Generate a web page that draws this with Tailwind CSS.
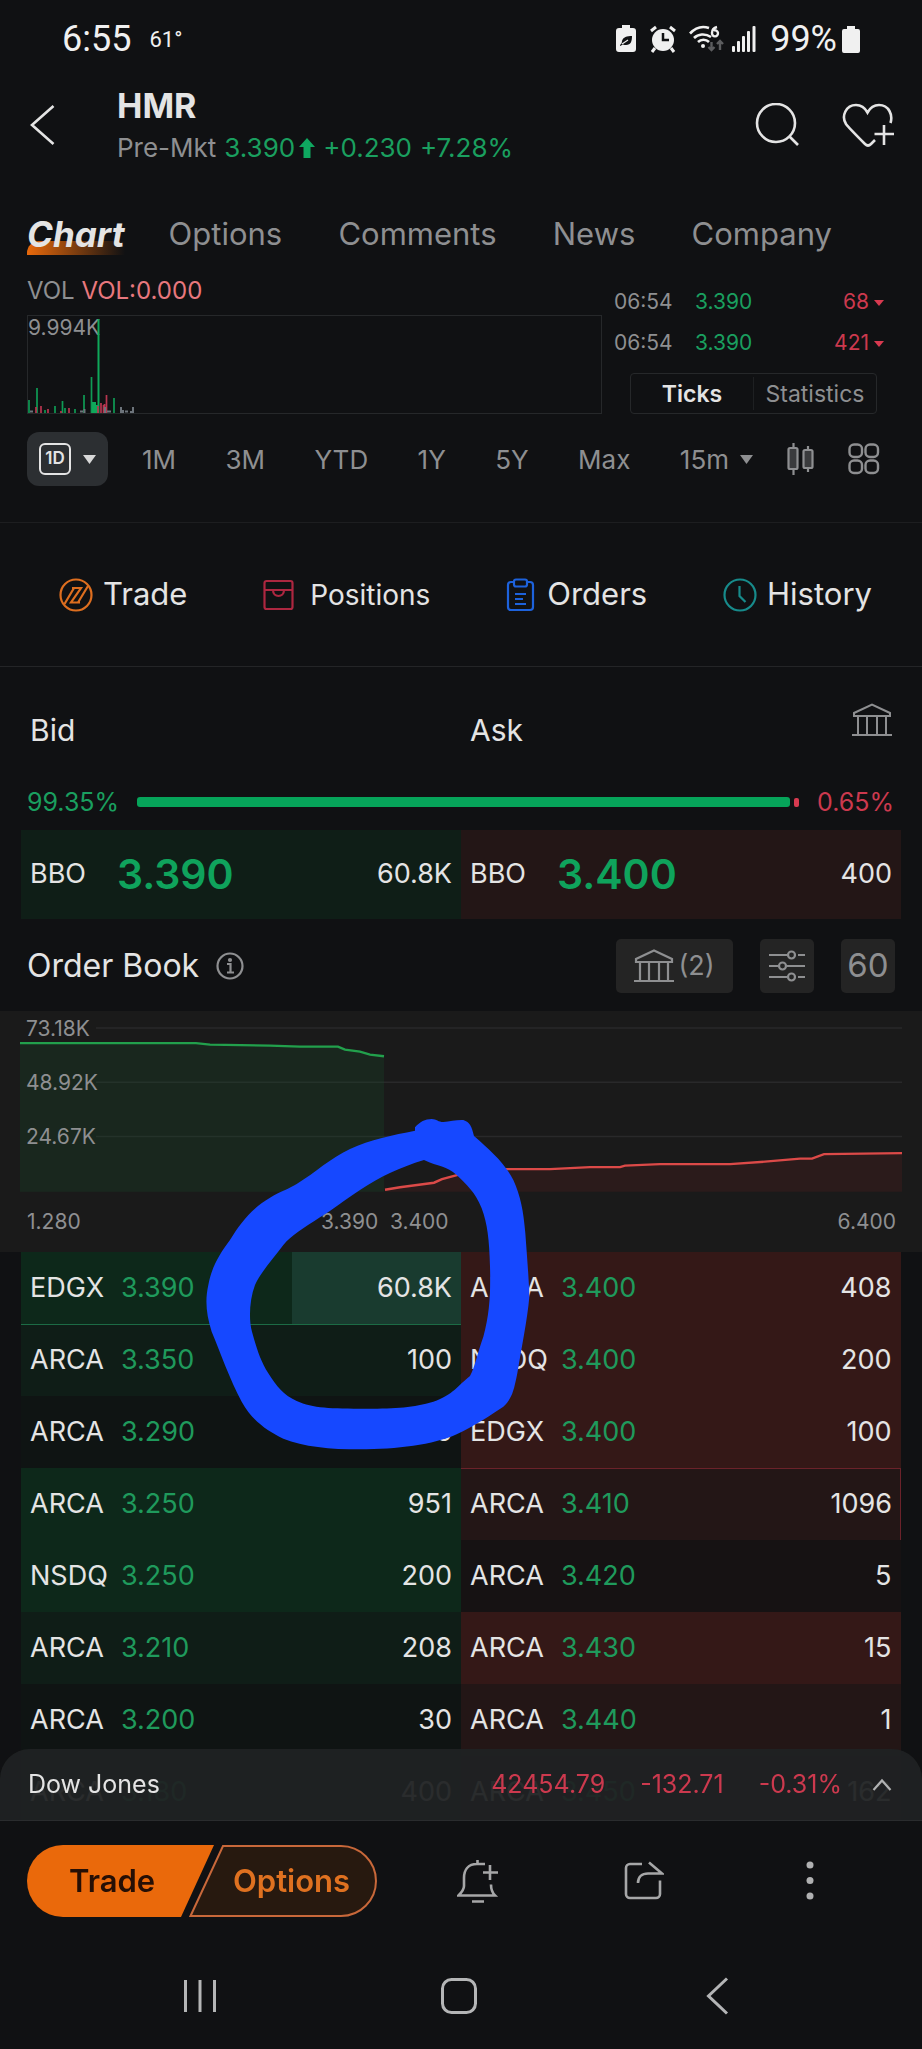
<!DOCTYPE html>
<html lang="en">
<head>
<meta charset="utf-8">
<meta name="viewport" content="width=device-width, initial-scale=1">
<title>HMR – Quote</title>
<script src="https://cdn.jsdelivr.net/npm/@tailwindcss/browser@4"></script>
</head>
<body class="bg-[#101113] text-[#e4e4e4] font-['Inter','Liberation_Sans',sans-serif]">
<div class="relative min-h-screen overflow-hidden">

  <!-- Device status bar -->
  <div class="flex h-[78px] items-center justify-between pl-[62px] pr-[62px] font-['Roboto',sans-serif] text-[#f0f0f0]">
    <div class="flex items-center gap-[18px]">
      <span class="text-[36px]">6:55</span>
      <span class="text-[22px]">61°</span>
    </div>
    <div class="flex items-center">
      <svg class="mr-[14px]" width="20" height="28" viewBox="0 0 20 28" fill="#f0f0f0"><path d="M6 0h8v3h3a3 3 0 0 1 3 3v18a3 3 0 0 1-3 3H3a3 3 0 0 1-3-3V6a3 3 0 0 1 3-3h3z"/><path d="M4 20c1-1 2-2 2-4 1-4 5-5 10-5 0 5-1 9-6 9-1 0-2 0-3-.5L4 21z" fill="#101113"/><path d="M6 19l6-4" stroke="#f0f0f0" stroke-width="1.2"/></svg>
      <svg class="mr-[13px]" width="26" height="28" viewBox="0 0 26 28"><circle cx="13" cy="15" r="11" fill="#f0f0f0"/><path d="M13 8v7h6" stroke="#101113" stroke-width="2.5" fill="none"/><path d="M1 6l5-4M25 6l-5-4M5 23l-3 4M21 23l3 4" stroke="#f0f0f0" stroke-width="3"/></svg>
      <svg class="mr-[8px]" width="35" height="28" viewBox="0 0 35 28" fill="none"><path d="M1 8.500C7 2 14 1 20 3M5 13c4-4 11-5 17-1M9 17c3-3 8-3 11 0" stroke="#f0f0f0" stroke-width="2.600"/><circle cx="14" cy="21" r="2" fill="#f0f0f0"/><path d="M28 2c-4 1-5 4-5 6a3 3 0 1 0 2-2.500" stroke="#f0f0f0" stroke-width="2.400"/><path d="M22.500 17v8m-3-3l3 3 3-3M31 25v-9m-3 3l3-3 3 3" stroke="#5c5d5f" stroke-width="2.400"/></svg>
      <svg class="mr-[14px]" width="24" height="26" viewBox="0 0 24 26" fill="#f0f0f0"><rect y="20" width="3" height="6" rx="1"/><rect x="5" y="15" width="3" height="11" rx="1"/><rect x="10" y="10" width="3" height="16" rx="1"/><rect x="15" y="5" width="3" height="21" rx="1"/><rect x="20.500" width="3" height="26" rx="1"/></svg>
      <span class="mr-[5px] text-[36px]">99%</span>
      <svg width="18" height="27" viewBox="0 0 18 27" fill="#f0f0f0"><path d="M5 0h8v3h3a2 2 0 0 1 2 2v20a2 2 0 0 1-2 2H2a2 2 0 0 1-2-2V5a2 2 0 0 1 2-2h3z"/></svg>
    </div>
  </div>

  <!-- Ticker header -->
  <header class="flex h-[94px] items-center pl-[30px] pr-[28px]">
    <button aria-label="Back" class="mr-[62px]"><svg width="25" height="42" viewBox="0 0 25 42" fill="none" stroke="#e4e4e4" stroke-width="2.600"><path d="M23.500 2L2 21l21.500 19"/></svg></button>
    <div class="flex-1 pt-[3px]">
      <h1 class="text-[34px] leading-[42px] font-bold">HMR</h1>
      <p class="flex items-center gap-[8px] text-[26px] leading-[42px] text-[#1a9f5f]">
        <span class="text-[#8e8f91]">Pre-Mkt</span>
        <span class="flex items-center gap-[4px]">3.390<svg width="16" height="20" viewBox="0 0 16 20" fill="#0fa860"><path d="M8 0l8 9h-4.500v11h-7V9H0z"/></svg></span>
        <span>+0.230</span><span>+7.28%</span>
      </p>
    </div>
    <button aria-label="Search" class="mr-[43px]"><svg width="44" height="44" viewBox="0 0 44 44" fill="none" stroke="#e4e4e4" stroke-width="2.600"><circle cx="21" cy="20" r="19"/><path d="M34 33l9 9"/></svg></button>
    <button aria-label="Add to watchlist"><svg width="52" height="44" viewBox="0 0 52 44" fill="none" stroke="#e4e4e4" stroke-width="2.600"><path d="M48.500 20C51 12 47 2 37 2c-5 0-9 3-11.500 7.500C23 5 19 2 14 2 4 2-1 13 4 21c3 4 13 14 19 20 2 2 4 2 6 0l4-4M42 22v20M32.500 31H52"/></svg></button>
  </header>

  <!-- Section tabs -->
  <nav class="flex items-center pt-[38px] pr-[90px] pl-[27px] text-[31px] leading-[48px] text-[#8e8f91]">
    <a href="#chart" class="relative mr-[44px] text-[35px] font-bold text-[#e4e4e4] italic"><span class="absolute bottom-[3px] left-0 h-[14px] w-full rounded-tl-[12px] bg-linear-to-r from-[#e8690b] to-transparent"></span><span class="relative">Chart</span></a>
    <div class="flex flex-1 justify-between">
      <a href="#options">Options</a>
      <a href="#comments">Comments</a>
      <a href="#news">News</a>
      <a href="#company">Company</a>
    </div>
  </nav>

  <!-- Volume chart and recent ticks -->
  <section class="flex gap-[12px] pl-[27px]">
    <div class="flex-1 pt-[14px]">
      <p class="mb-[5px] text-[24px] leading-[38px] text-[#8e8f91]">VOL <span class="text-[#e8787e]">VOL:0.000</span></p>
      <div class="relative h-[99px] border border-[#26282a]">
        <span class="text-[21px] leading-[24px] text-[#8e8f91]">9.994K</span>
        <svg class="absolute bottom-0 left-0" width="110" height="97" viewBox="0 0 110 97">
          <path stroke="#0f9b55" stroke-width="1.700" d="M1 97V84M9 97V72M17 97v-3M27 97v-7M34.500 97V85M37 97v-5M47 97v-4M56 97V79M63.500 97V61M86 97V82"/>
          <path stroke="#0fa85a" stroke-width="2" d="M70.500 97V3M65 97V86M67 97V86M69 97V89"/>
          <path stroke="#b83650" stroke-width="1.700" d="M8 97v-6M13 97v-7M20 97v-4M33 97v-2M41 97v-5M70 97v-7M73 97V87M75.500 97v-8M78.500 97V79M76.500 97v-9"/>
          <path stroke="#6d747b" stroke-width="2" d="M2 95.500h3M52 95.500h3M56.500 97v-4M77 97v-6M79 95.500h4M93 97v-6M95 97v-3M97 95.500h3M103 97v-2M105 97v-6"/>
        </svg>
      </div>
    </div>
    <div class="w-[308px] pt-[23px]">
      <table class="w-[270px] text-[21px]">
        <tbody>
          <tr class="h-[41px]"><td class="w-[81px] text-[#8e8f91]">06:54</td><td class="text-[#1a9f5f]">3.390</td><td class="text-right text-[#cc394e]">68<svg class="ml-[5px] inline align-middle" width="10" height="7" viewBox="0 0 10 7"><path d="M0 0h10L5 6z" fill="#d83a50"/></svg></td></tr>
          <tr class="h-[41px]"><td class="text-[#8e8f91]">06:54</td><td class="text-[#1a9f5f]">3.390</td><td class="text-right text-[#cc394e]">421<svg class="ml-[5px] inline align-middle" width="10" height="7" viewBox="0 0 10 7"><path d="M0 0h10L5 6z" fill="#d83a50"/></svg></td></tr>
        </tbody>
      </table>
      <div class="mt-[10px] ml-[16px] flex h-[41px] w-[247px] items-center rounded-[4px] border border-[#26282a] text-[23px]">
        <button class="h-[33px] flex-1 border-r border-[#1e2022] font-semibold leading-[30px]">Ticks</button>
        <button class="h-[33px] flex-1 leading-[30px] text-[#8e8f91]">Statistics</button>
      </div>
    </div>
  </section>

  <!-- Time range -->
  <div class="mt-[18px] flex items-center border-b border-[#1d1e20] pr-[42px] pb-[36px] pl-[27px] text-[26px] text-[#8e8f91]">
    <button aria-label="1 day" class="flex h-[54px] w-[81px] items-center justify-center gap-[12px] rounded-[12px] bg-[#2c2f32] text-[#e4e4e4]">
      <span class="flex h-[32px] w-[32px] items-center justify-center rounded-[6px] border-2 border-[#e4e4e4] text-[17px] font-semibold">1D</span>
      <svg width="13" height="9" viewBox="0 0 13 9"><path d="M0 0h13L6.500 9z" fill="#d8d8d8"/></svg>
    </button>
    <div class="flex flex-1 items-center justify-between px-[34px]">
      <button>1M</button><button>3M</button><button>YTD</button><button>1Y</button><button>5Y</button><button>Max</button>
      <button class="flex items-center gap-[11px]">15m<svg width="13" height="9" viewBox="0 0 13 9"><path d="M0 0h13L6.500 9z" fill="#8e8f91"/></svg></button>
    </div>
    <button aria-label="Candles" class="mr-[33px]"><svg width="28" height="32" viewBox="0 0 28 32" fill="#3a3b3d" stroke="#8e8f91" stroke-width="2.200"><path d="M6.500 0v32M21 3v26"/><rect x="1.500" y="5" width="9" height="21" rx="1.500"/><rect x="16.500" y="7" width="9" height="18" rx="1.500"/></svg></button>
    <button aria-label="Chart tools"><svg width="32" height="32" viewBox="0 0 32 32" fill="none" stroke="#8e8f91" stroke-width="2.400"><rect x="1.500" y="1.500" width="12.500" height="12.500" rx="4.500"/><rect x="17.500" y="1.500" width="12.500" height="12.500" rx="4.500"/><rect x="1.500" y="17.500" width="12.500" height="12.500" rx="4.500"/><rect x="17.500" y="17.500" width="12.500" height="12.500" rx="4.500"/></svg></button>
  </div>

  <!-- Shortcuts -->
  <nav class="flex h-[144px] items-center justify-between border-b border-[#242527] pr-[50px] pl-[59px] text-[31px]">
    <a href="#trade" class="flex items-center gap-[10px]"><svg width="34" height="34" viewBox="0 0 34 34" fill="none" stroke="#dd6e1f" stroke-width="2.200"><circle cx="17" cy="17" r="15.500"/><path d="M13 10h9L12 24.500h9M5.500 26L15 10M19 24.500L29 8"/></svg>Trade</a>
    <a href="#positions" class="flex items-center gap-[15px] text-[28px]"><svg width="32" height="32" viewBox="0 0 32 32" fill="none" stroke="#ad2740" stroke-width="2.200"><rect x="1.500" y="2" width="28" height="28" rx="2"/><path d="M1.500 11h28M10 11c0 8 11 8 11 0"/></svg>Positions</a>
    <a href="#orders" class="flex items-center gap-[12px]"><svg width="29" height="34" viewBox="0 0 29 34" fill="none" stroke="#1d62dc" stroke-width="2.200"><path d="M8 4H5a3 3 0 0 0-3 3v22a3 3 0 0 0 3 3h19a3 3 0 0 0 3-3V7a3 3 0 0 0-3-3h-3"/><rect x="8" y="1.500" width="13" height="7" rx="2"/><path d="M9 16h11M9 21h8M9 26h11"/></svg>Orders</a>
    <a href="#history" class="flex items-center gap-[10px]"><svg width="34" height="34" viewBox="0 0 34 34" fill="none" stroke="#178b8b" stroke-width="2.200"><circle cx="17" cy="17" r="15.500"/><path d="M16.500 8v10l6 6"/></svg>History</a>
  </nav>

  <!-- Bid / Ask summary -->
  <section>
    <div class="flex items-start px-[30px] pt-[40px] text-[30px] leading-[46px]">
      <h2 class="w-[440px]">Bid</h2>
      <h2 class="flex-1">Ask</h2>
      <button aria-label="Exchanges" class="-mt-[4px]"><svg width="40" height="34" viewBox="0 0 40 34" fill="none" stroke="#8e8f91" stroke-width="2"><path d="M2 13v-3L20 1.500 38 10v3zM6 13v18M15 13v18M25 13v18M34 13v18M0 32h40"/></svg></button>
    </div>
    <div class="flex items-center pt-[30px] pr-[28px] pb-[9px] pl-[27px] text-[25px] leading-[38px]">
      <span class="w-[110px] text-[#1a9f5f]">99.35%</span>
      <span class="h-[10px] flex-1 rounded-[3px] bg-[#06a45a]"></span>
      <span class="ml-[4px] h-[9px] w-[5px] rounded-[2px] bg-[#d83a50]"></span>
      <span class="w-[95px] text-right text-[#cc394e]">0.65%</span>
    </div>
    <div class="mr-[21px] ml-[21px] grid h-[89px] grid-cols-2 text-[27px]">
      <div class="flex items-center bg-[#0f1e17] px-[9px]"><span class="w-[87px]">BBO</span><span class="flex-1 text-[41px] font-semibold text-[#0fa35c]">3.390</span><span>60.8K</span></div>
      <div class="flex items-center bg-[#231616] px-[9px]"><span class="w-[87px]">BBO</span><span class="flex-1 text-[41px] font-semibold text-[#0fa35c]">3.400</span><span>400</span></div>
    </div>
  </section>

  <!-- Order book -->
  <section>
    <div class="flex h-[92px] items-center pt-[2px] pr-[27px] pl-[27px]">
      <h2 class="mr-[17px] text-[32px]">Order Book</h2>
      <button aria-label="About the order book" class="flex-1"><svg width="28" height="28" viewBox="0 0 28 28" fill="none" stroke="#8e8f91" stroke-width="2.200"><circle cx="14" cy="14" r="12.500"/><path d="M11 12h3.500v8.500M11 20.500h7"/><circle cx="14" cy="8" r="1" fill="#8e8f91"/></svg></button>
      <button class="mr-[27px] flex h-[54px] w-[117px] items-center justify-center gap-[4px] rounded-[5px] bg-[#242424] text-[27px] text-[#8e8f91]"><svg width="40" height="34" viewBox="0 0 40 34" fill="none" stroke="#8e8f91" stroke-width="2.200"><path d="M2 13v-3L20 1.500 38 10v3zM6 13v18M15 13v18M25 13v18M34 13v18M0 32h40"/></svg>(2)</button>
      <button aria-label="Settings" class="mr-[27px] flex h-[54px] w-[54px] items-center justify-center rounded-[5px] bg-[#242424]"><svg width="36" height="32" viewBox="0 0 36 32" fill="none" stroke="#8e8f91" stroke-width="2.200"><path d="M0 5h18M29 5h7M0 16h9M18 16h18M0 27h18M29 27h7"/><circle cx="22.500" cy="5" r="3.500"/><circle cx="13.500" cy="16" r="3.500"/><circle cx="22.500" cy="27" r="3.500"/></svg></button>
      <button class="flex h-[54px] w-[54px] items-center justify-center rounded-[5px] bg-[#242424] text-[33px] text-[#8e8f91]">60</button>
    </div>

    <div class="relative h-[241px] bg-[#1a1a1a] text-[21px] leading-[30px] text-[#8e8f91]">
      <svg class="absolute inset-0 h-full w-full" viewBox="0 0 922 240" preserveAspectRatio="none">
        <path d="M96 17H902M96 71H902M96 125H902" stroke="#29292a" stroke-width="1.500"/>
        <path d="M20 32H196L210 33.500 270 34.500 300 35.500H338L345 38.500 360 40.500 370 43.500 384 45V180H20Z" fill="#17512b" fill-opacity=".25"/>
        <path d="M385 178L400 175.500 434 171 442 167.500 470 160 500 157.500H550L590 155.500H620L625 154 660 152.500H730L765 150 800 147H812L824 142.500 902 141.500V180H385Z" fill="#7a2024" fill-opacity=".18"/>
        <path d="M20 32H196L210 33.500 270 34.500 300 35.500H338L345 38.500 360 40.500 370 43.500 384 45" fill="none" stroke="#22a04c" stroke-width="2.400"/>
        <path d="M385 178L400 175.500 434 171 442 167.500 470 160 500 157.500H550L590 155.500H620L625 154 660 152.500H730L765 150 800 147H812L824 142.500 902 141.500" fill="none" stroke="#dc4a48" stroke-width="2.400"/>
      </svg>
      <div class="relative flex flex-col gap-[24px] pt-[3px] pl-[26px]"><span>73.18K</span><span>48.92K</span><span>24.67K</span></div>
      <div class="relative mt-[55px] flex pr-[26px] pl-[27px]"><span class="w-[294px]">1.280</span><span class="w-[69px]">3.390</span><span class="flex-1">3.400</span><span>6.400</span></div>
    </div>

    <div class="mr-[21px] ml-[21px] grid grid-cols-2 text-[27px]">
      <table class="w-full">
        <tbody>
          <tr class="h-[72px] bg-[#0d281a]" style="background-image:linear-gradient(to left,#193b2f 38.600%,transparent 38.600%)"><td class="w-[100px] border-b border-[#1c6b45] pl-[9px]">EDGX</td><td class="border-b border-[#1c6b45] text-[#1f9a5c]">3.390</td><td class="border-b border-[#1c6b45] pr-[9px] text-right">60.8K</td></tr>
          <tr class="h-[72px] bg-[#0f1d17]"><td class="pl-[9px]">ARCA</td><td class="text-[#1f9a5c]">3.350</td><td class="pr-[9px] text-right">100</td></tr>
          <tr class="h-[72px] bg-[#0f1413]"><td class="pl-[9px]">ARCA</td><td class="text-[#1f9a5c]">3.290</td><td class="pr-[9px] text-right">6</td></tr>
          <tr class="h-[72px] bg-[#0d281a]"><td class="pl-[9px]">ARCA</td><td class="text-[#1f9a5c]">3.250</td><td class="pr-[9px] text-right">951</td></tr>
          <tr class="h-[72px] bg-[#0d281a]"><td class="pl-[9px]">NSDQ</td><td class="text-[#1f9a5c]">3.250</td><td class="pr-[9px] text-right">200</td></tr>
          <tr class="h-[72px] bg-[#0f1d17]"><td class="pl-[9px]">ARCA</td><td class="text-[#1f9a5c]">3.210</td><td class="pr-[9px] text-right">208</td></tr>
          <tr class="h-[72px] bg-[#0f1413]"><td class="pl-[9px]">ARCA</td><td class="text-[#1f9a5c]">3.200</td><td class="pr-[9px] text-right">30</td></tr>
          <tr class="h-[72px] bg-[#0f1d17]"><td class="pl-[9px]">ARCA</td><td class="text-[#1f9a5c]">3.180</td><td class="pr-[9px] text-right">400</td></tr>
        </tbody>
      </table>
      <table class="w-full">
        <tbody>
          <tr class="h-[72px] bg-[#341817]"><td class="w-[100px] pl-[9px]">ARCA</td><td class="text-[#1f9a5c]">3.400</td><td class="pr-[9px] text-right">408</td></tr>
          <tr class="h-[72px] bg-[#341817]"><td class="pl-[9px]">NSDQ</td><td class="text-[#1f9a5c]">3.400</td><td class="pr-[9px] text-right">200</td></tr>
          <tr class="h-[72px] bg-[#341817]"><td class="border-b border-[#6b222a] pl-[9px]">EDGX</td><td class="border-b border-[#6b222a] text-[#1f9a5c]">3.400</td><td class="border-b border-[#6b222a] pr-[9px] text-right">100</td></tr>
          <tr class="h-[72px] bg-[#231616]"><td class="pl-[9px]">ARCA</td><td class="text-[#1f9a5c]">3.410</td><td class="border-r border-[#6b222a] pr-[8px] text-right">1096</td></tr>
          <tr class="h-[72px] bg-[#161213]"><td class="pl-[9px]">ARCA</td><td class="text-[#1f9a5c]">3.420</td><td class="pr-[9px] text-right">5</td></tr>
          <tr class="h-[72px] bg-[#341817]"><td class="pl-[9px]">ARCA</td><td class="text-[#1f9a5c]">3.430</td><td class="pr-[9px] text-right">15</td></tr>
          <tr class="h-[72px] bg-[#231616]"><td class="pl-[9px]">ARCA</td><td class="text-[#1f9a5c]">3.440</td><td class="pr-[9px] text-right">1</td></tr>
          <tr class="h-[72px] bg-[#161213]"><td class="pl-[9px]">ARCA</td><td class="text-[#1f9a5c]">3.450</td><td class="pr-[9px] text-right">162</td></tr>
        </tbody>
      </table>
    </div>
  </section>

  <!-- Hand-drawn marker ring around the best bid size -->
  <svg class="pointer-events-none absolute top-[1100px] left-[180px]" width="380" height="370" viewBox="0 0 1140 1110" aria-hidden="true">
    <path fill="#1648ff" fill-rule="evenodd" d="M705 82C720 65 735 57 755 57C770 58 775 66 790 66C810 64 830 59 850 60C870 66 875 80 882 108C930 150 975 190 1000 240C1022 290 1030 330 1036 400C1042 480 1048 560 1048 590C1042 660 1025 740 1012 820C1000 880 995 895 970 920C940 940 880 980 830 1003C760 1035 650 1048 540 1048C450 1048 370 1040 310 1016C260 992 215 960 185 905C150 840 120 755 95 695C78 640 75 600 85 555C95 500 120 460 150 420C180 370 215 325 270 293C300 275 330 265 350 252C410 215 450 175 510 147C570 118 640 105 705 92ZM732 180C660 202 600 230 540 270C490 302 460 328 420 352C370 385 335 405 310 435C280 475 240 520 225 555C208 600 206 660 216 695C230 745 240 780 265 820C290 860 310 885 350 903C400 925 450 926 560 926C650 926 700 922 760 905C820 885 835 855 870 828C885 800 895 750 910 710C930 640 932 570 930 500C928 420 922 370 905 325C885 275 860 255 830 225C800 198 775 200 732 180Z"/>
  </svg>
</div>

<!-- Docked footer -->
<footer class="fixed inset-x-0 bottom-0">
  <div class="flex h-[72px] items-center rounded-t-[30px] border-b border-[#2a2c2e] bg-[#202223]/95 pr-[30px] pl-[28px] text-[25px]">
    <span class="flex-1">Dow Jones</span>
    <span class="mr-[35px] text-[#cc394e]">42454.79</span>
    <span class="mr-[35px] text-[#cc394e]">-132.71</span>
    <span class="mr-[30px] text-[#cc394e]">-0.31%</span>
    <button aria-label="Expand"><svg width="20" height="14" viewBox="0 0 20 14" fill="none" stroke="#b0b1b2" stroke-width="2.200"><path d="M1.500 12L10 2.500l8.500 9.500"/></svg></button>
  </div>
  <div class="flex h-[120px] items-center bg-[#101113] pr-[91px] pl-[27px]">
    <button class="relative flex h-[72px] w-[187px] items-center pl-[42px] text-[31px] font-semibold text-[#260f05]"><svg class="absolute inset-0" width="187" height="72" viewBox="0 0 187 72"><path d="M36 0H187L154 72H36A36 36 0 0 1 36 0Z" fill="#ea690b"/></svg><span class="relative">Trade</span></button>
    <button class="relative -ml-[25px] flex h-[72px] w-[188px] items-center pl-[44px] text-[31px] font-semibold text-[#df7120]"><svg class="absolute inset-0" width="188" height="72" viewBox="0 0 188 72"><path d="M34 1H152A35 35 0 0 1 152 71H1.500Z" fill="#27190f" stroke="#c8683a" stroke-width="2"/></svg><span class="relative">Options</span></button>
    <div class="ml-[80px] flex flex-1 items-center justify-between">
      <button aria-label="Add alert" class="flex w-[42px] justify-center"><svg width="42" height="46" viewBox="0 0 42 46" fill="none" stroke="#a6a7a8" stroke-width="2.600"><path d="M28 6h-8C11 6 7 12 7 20v8c0 3-3 7-5.500 9.500H38c-3-3-4-6-4-11M20.500 2v4M15 43.500h12M33 7v15M26 14.500h15"/></svg></button>
      <button aria-label="Share" class="flex w-[42px] justify-center"><svg width="40" height="40" viewBox="0 0 40 40" fill="none" stroke="#a6a7a8" stroke-width="2.600"><path d="M18 3H6a4 4 0 0 0-4 4v26a4 4 0 0 0 4 4h26a4 4 0 0 0 4-4V19.500M14 22c0-6 4-9.500 10-9.500h14L25 1.500"/></svg></button>
      <button aria-label="More" class="flex w-[42px] justify-center"><svg width="10" height="40" viewBox="0 0 10 40" fill="#b0b1b2"><circle cx="5" cy="4" r="3.500"/><circle cx="5" cy="19.500" r="3.500"/><circle cx="5" cy="35" r="3.500"/></svg></button>
    </div>
  </div>
  <div class="flex h-[108px] items-start justify-between bg-[#101113] pt-[36px] pr-[186px] pl-[181px]">
    <button aria-label="Recent apps" class="flex w-[38px] justify-center"><svg width="34" height="38" viewBox="0 0 34 38" stroke="#b4b5b6" stroke-width="3"><path d="M2.500 3v32M17 3v32M31.500 3v32"/></svg></button>
    <button aria-label="Home" class="flex w-[38px] justify-center"><svg width="38" height="38" viewBox="0 0 38 38" fill="none" stroke="#b4b5b6" stroke-width="3"><rect x="2.500" y="2.500" width="33" height="33" rx="9"/></svg></button>
    <button aria-label="Back" class="flex w-[38px] justify-center"><svg width="23" height="38" viewBox="0 0 23 38" fill="none" stroke="#b4b5b6" stroke-width="3"><path d="M21 1.500L2.500 19 21 36.500"/></svg></button>
  </div>
</footer>
</body>
</html>
